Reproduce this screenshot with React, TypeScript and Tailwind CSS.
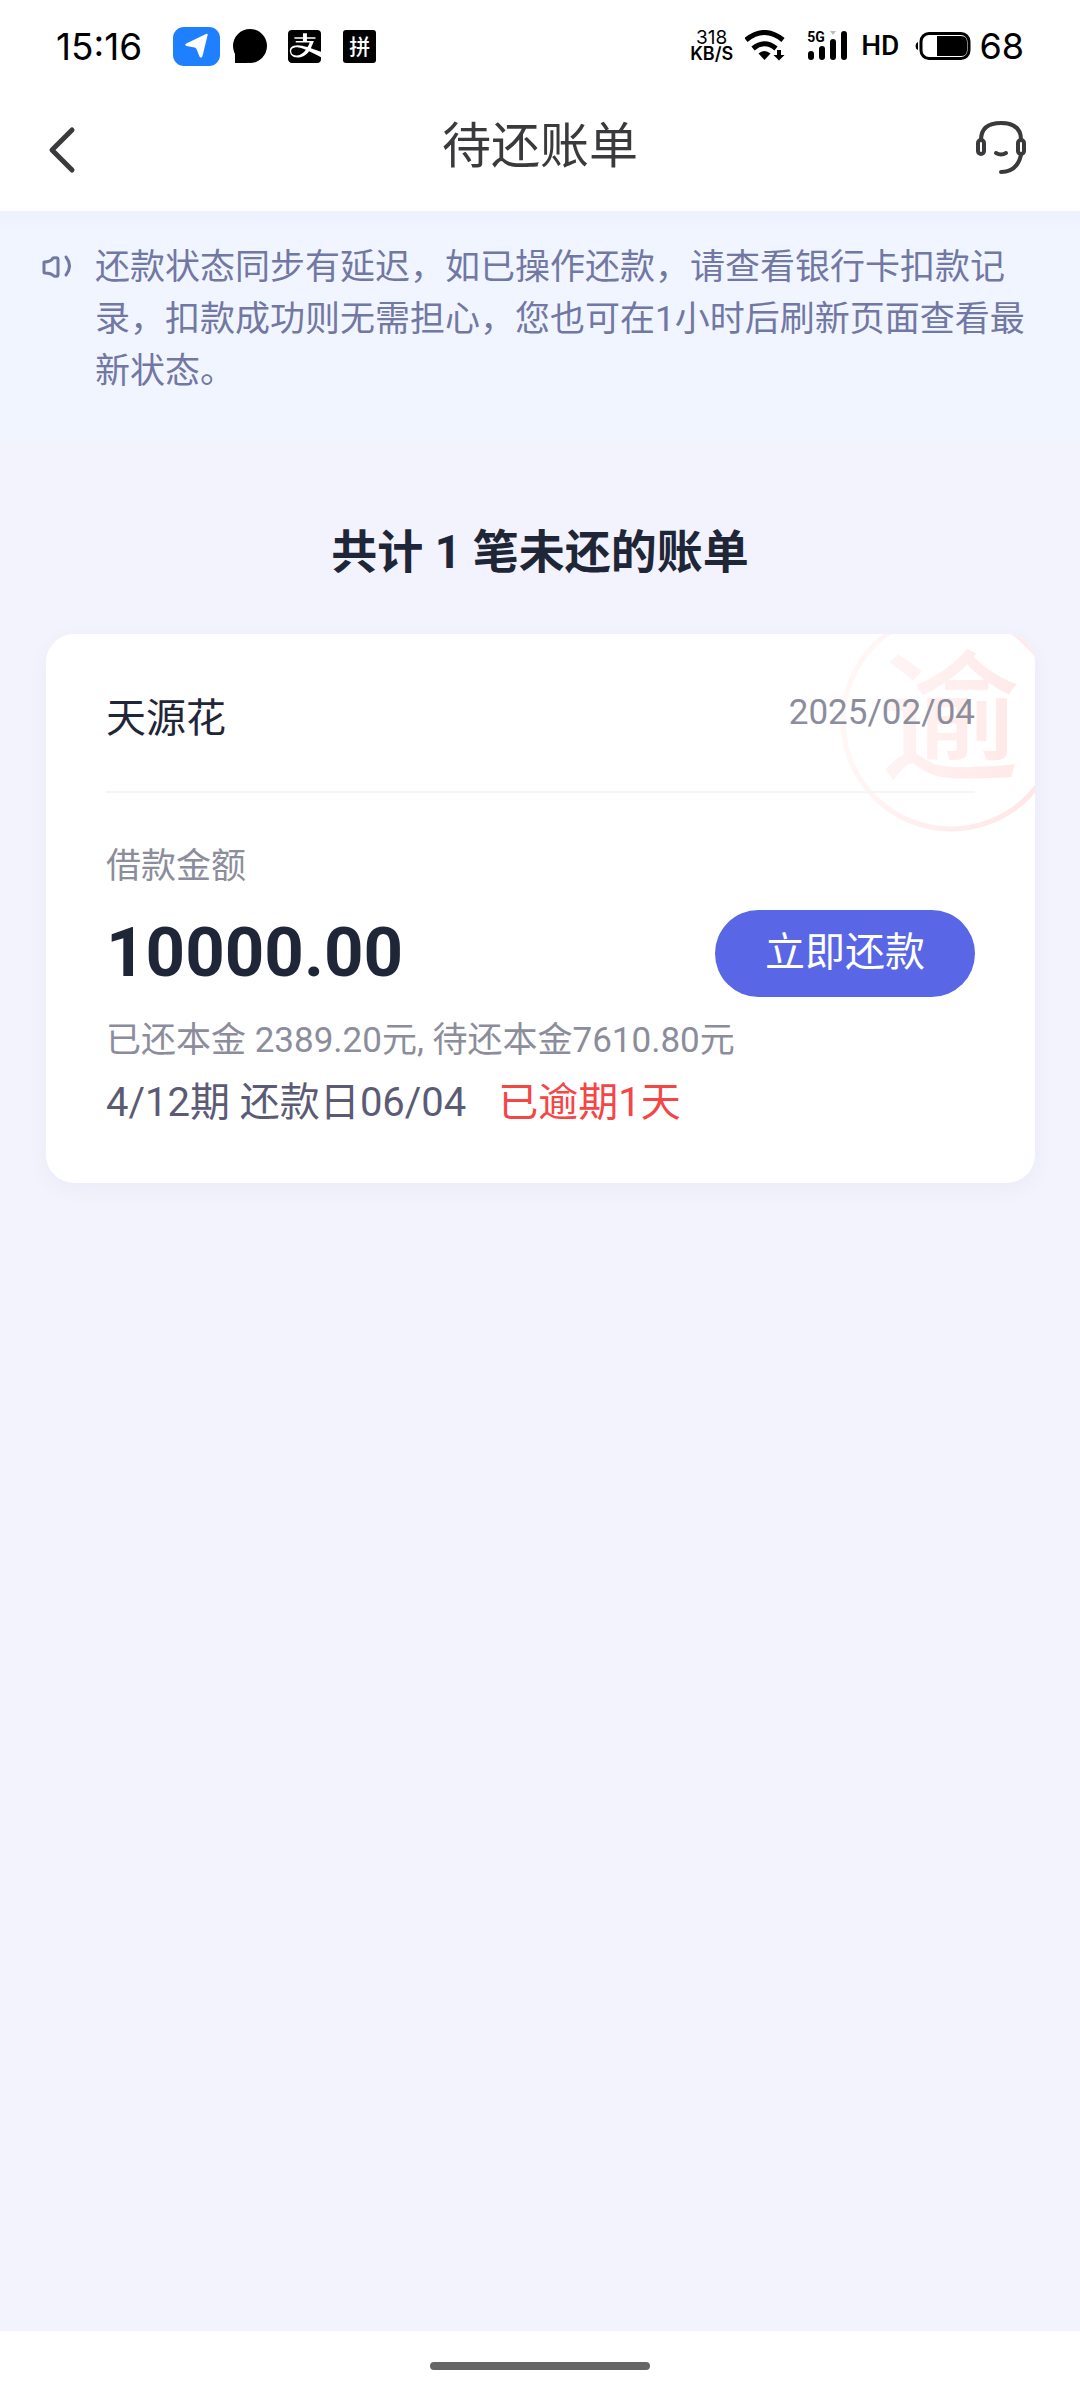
import { FaAlipay } from "react-icons/fa";

const bills = [
  {
    id: "1",
    name: "天源花",
    date: "2025/02/04",
    amount: "10000.00",
    paid: "2389.20",
    remaining: "7610.80",
    period: "4/12",
    dueDay: "06/04",
    overdueDays: 1,
  },
];

function StatusBar() {
  return (
    <div className="flex h-[92px] items-center justify-between px-14 font-['Inter','Noto_Sans_CJK_SC',sans-serif] text-black">
      <div className="flex items-center">
        <span className="text-[37px] leading-none">15:16</span>
        <span className="ml-[31px] flex h-[39px] w-[47px] items-center justify-center rounded-[11px] bg-[#1f80ff]">
          <svg width="26" height="28" viewBox="0 0 26 28" fill="#fff">
            <path d="M22 2q2-1 1.600 1.200L18.500 24q-1.200 3-3 .4L12.500 17q-.5-1.200-1.800-1.400L2.500 14q-2.600-1-.2-2.400Z" />
          </svg>
        </span>
        <svg className="ml-3" width="36" height="36" viewBox="0 0 36 36">
          <circle cx="18" cy="18" r="17" />
          <path d="M3 22v13h13Z" />
        </svg>
        <span className="ml-5 flex h-[33px] w-[33px] items-center justify-center overflow-hidden rounded-[4px]">
          <FaAlipay size={40} className="shrink-0" />
        </span>
        <span className="ml-[22px] flex h-[33px] w-[33px] items-center justify-center rounded-[3px] bg-black text-[21px] font-medium leading-none text-white">
          拼
        </span>
      </div>

      <div className="flex items-center">
        <div className="flex flex-col items-center leading-4">
          <span className="text-[19px]">318</span>
          <span className="text-[18px] font-semibold">KB/S</span>
        </div>
        {/* Wifi */}
        <svg className="ml-3" width="40" height="32" viewBox="0 0 40 32">
          <g fill="none" stroke="#000" strokeWidth="5">
            <path d="M1 10Q19.500-5 38 10" />
            <path d="M8 18.500Q19.500 9 31 18.500" />
          </g>
          <path d="M13.500 23.500Q19.500 18.500 25.500 23.500L19.500 30Z" />
          <path d="M32 20h4v5h3.500L34 30.500 28.500 25H32Z" />
        </svg>
        {/* Mobile signal */}
        <div className="relative ml-[22px]">
          <svg width="42" height="32" viewBox="0 0 42 32">
            <g stroke="#000" strokeWidth="6" strokeLinecap="round">
              <path d="M4 24v3M15 19v8M26 12v15M37 4v23" />
            </g>
            <path d="M23 1h6l-3 4Z" fill="#bbb" />
          </svg>
          <span className="absolute left-0 top-0 font-['Roboto',sans-serif] text-[14px] font-bold leading-none">5G</span>
        </div>
        <span className="ml-3 font-['Roboto',sans-serif] text-[28px] font-medium leading-none">HD</span>
        {/* Battery */}
        <svg className="ml-4" width="56" height="28" viewBox="0 0 56 28">
          <path d="M3 10v8q-2.500-1-2.500-4T3 10Z" />
          <rect x="6" y="1.500" width="48" height="25" rx="8" fill="none" stroke="#000" strokeWidth="3" />
          <path d="M22 4h24q6 0 6 6v8q0 6-6 6H22Z" />
        </svg>
        <span className="ml-2 text-[36px] leading-none">68</span>
      </div>
    </div>
  );
}

function NavBar() {
  return (
    <header className="grid h-[119px] grid-cols-[1fr_auto_1fr] items-center pb-1 pl-[47px] pr-[51px] text-[#3a3a3c]">
      <button type="button" aria-label="返回" className="justify-self-start">
        <svg width="30" height="48" viewBox="0 0 30 48" fill="none" stroke="currentColor" strokeWidth="5" strokeLinecap="round" strokeLinejoin="round">
          <path d="M25 4 5 24 25 44" />
        </svg>
      </button>
      <h1 className="pb-[6px] pl-1 text-[49px] leading-[60px]">待还账单</h1>
      <button type="button" aria-label="客服" className="justify-self-end pb-1">
        <svg width="56" height="60" viewBox="0 0 56 60" fill="none" stroke="currentColor" strokeWidth="4" strokeLinecap="round">
          <path d="M8 22Q8 5 28 5t20 17" />
          <rect x="5" y="22" width="6" height="14" rx="3" />
          <rect x="45" y="22" width="6" height="14" rx="3" />
          <path d="M48 37Q44 54 28 54" />
          <path d="M23 35Q28 38 33 35" />
        </svg>
      </button>
    </header>
  );
}

function Notice() {
  return (
    <div className="flex bg-[#f1f5ff] bg-linear-to-b from-[#edf1fe] to-[#f1f5ff] to-10% px-[41px] pb-[41px] pt-[31px] text-[#7178a3]">
      <svg className="mt-[10px] shrink-0" width="34" height="32" viewBox="0 0 34 32" fill="none" stroke="currentColor" strokeWidth="3" strokeLinecap="round" strokeLinejoin="round">
        <path d="M3 10q7 0 9-4 5-1 5 1v16q0 2-4 1-3-3-9-3-1 0-1-1Z" />
        <path d="M25 5q7 9 0 18" />
      </svg>
      <p className="ml-5 text-[35px] leading-[52px]">
        还款状态同步有延迟，如已操作还款，请查看银行卡扣款记录，扣款成功则无需担心，您也可在1小时后刷新页面查看最新状态。
      </p>
    </div>
  );
}

function OverdueStamp() {
  return (
    <svg aria-hidden="true" className="pointer-events-none absolute right-0 top-0" width="196" height="200" viewBox="0 0 196 200">
      <defs>
        <linearGradient id="stamp" gradientUnits="userSpaceOnUse" x1="20" y1="80" x2="196" y2="110">
          <stop offset="0" stopColor="#fff6f6" />
          <stop offset="1" stopColor="#ffe7e7" />
        </linearGradient>
      </defs>
      <circle cx="112" cy="87" r="108" fill="none" stroke="url(#stamp)" strokeWidth="5" />
      <text x="111" y="134" textAnchor="middle" fill="url(#stamp)" className="text-[140px] font-medium">
        逾
      </text>
    </svg>
  );
}

function BillCard({ bill }: { bill: (typeof bills)[number] }) {
  return (
    <article className="relative overflow-hidden rounded-[28px] bg-white px-[60px] pb-[50px] shadow-[0_6px_20px_rgba(90,100,160,0.05)]">
      <OverdueStamp />

      <div className="relative flex h-[159px] items-center justify-between border-b-2 border-[#f5f5f7]">
        <h3 className="pt-3 text-[40px] leading-[56px] text-[#1f2638]">{bill.name}</h3>
        <time className="text-[35px] leading-[48px] text-[#8c8d9c]">{bill.date}</time>
      </div>

      <p className="pt-[50px] text-[35px] leading-[48px] text-[#8c8d9c]">借款金额</p>
      <div className="mt-[18px] flex items-center justify-between">
        <span className="text-[69px] font-bold leading-[88px] text-[#1f2638]">{bill.amount}</span>
        <button type="button" className="h-[87px] rounded-full bg-[#5966e6] px-[50px] text-[40px] text-white">
          立即还款
        </button>
      </div>
      <p className="mt-5 text-[35px] leading-[48px] text-[#8c8d9c]">
        已还本金 {bill.paid}元, 待还本金{bill.remaining}元
      </p>
      <p className="mt-2 flex gap-8 text-[40px] leading-[60px] text-[#5b5b76]">
        <span>
          {bill.period}期 还款日{bill.dueDay}
        </span>
        <span className="text-[#f54545]">已逾期{bill.overdueDays}天</span>
      </p>
    </article>
  );
}

export default function App() {
  return (
    <div className="flex min-h-screen flex-col bg-white font-['Roboto','Noto_Sans_CJK_SC',sans-serif]">
      <StatusBar />
      <NavBar />

      <main className="flex-1 bg-[#f2f3fc]">
        <Notice />
        <h2 className="pb-[52px] pt-[83px] text-center text-[46px] font-bold leading-[60px] text-[#1f2638]">
          共计 {bills.length} 笔未还的账单
        </h2>
        <div className="flex flex-col gap-8 pl-[46px] pr-[45px]">
          {bills.map((bill) => (
            <BillCard key={bill.id} bill={bill} />
          ))}
        </div>
      </main>

      {/* Gesture bar */}
      <div className="flex h-[69px] items-center justify-center">
        <div className="h-2 w-[220px] rounded-full bg-[#666]" />
      </div>
    </div>
  );
}
